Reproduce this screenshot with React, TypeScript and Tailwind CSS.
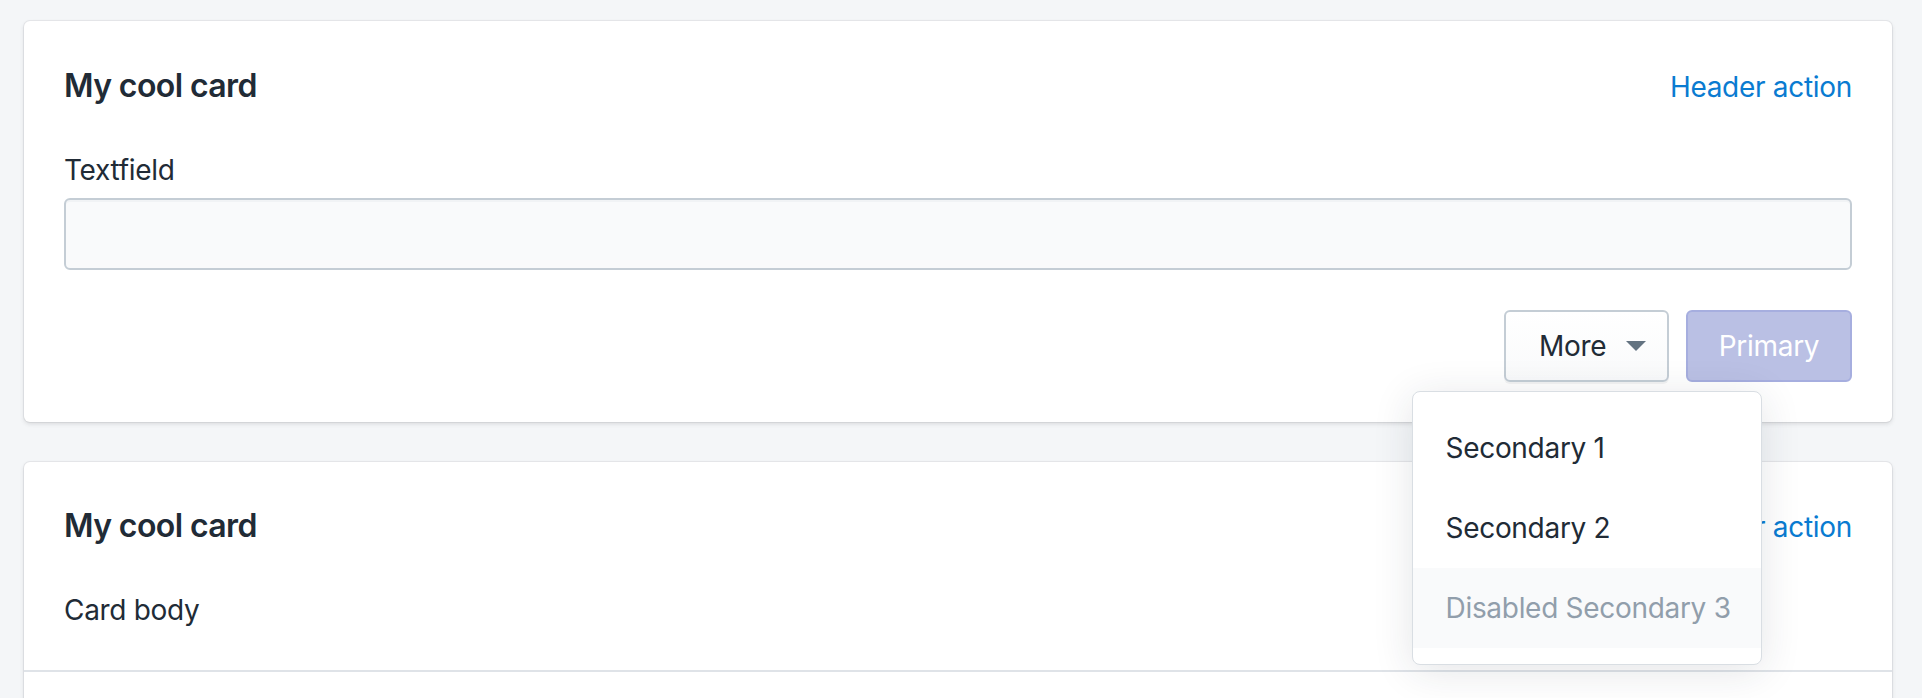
import React from "react";

function Caret() {
  return (
    <svg width="20" height="10" viewBox="0 0 20 10" className="block">
      <path d="M0 0 L20 0 L10 10 Z" fill="#637381" />
    </svg>
  );
}

export default function App() {
  return (
    <div
      className="min-h-screen bg-[#f4f6f8] pt-[21px] pl-[24px] pr-[30px] flex flex-col gap-[40px] text-[#212b36] tracking-[-0.3px]"
      style={{ fontFamily: "Inter, 'Noto Sans', sans-serif" }}
    >
      {/* Card 1 */}
      <div className="relative z-10 bg-white rounded-[6px] shadow-[0_0_0_1px_rgba(63,63,68,0.07),0_2px_4px_0_rgba(63,63,68,0.15)]">
        <div className="flex items-baseline justify-between px-[40px] pt-[41px]">
          <h2 className="text-[32px] leading-[48px] font-semibold tracking-[-0.6px]">My cool card</h2>
          <button className="text-[28px] leading-[40px] text-[#0a7bd1] tracking-[-0.3px]">Header action</button>
        </div>
        <div className="p-[40px]">
          <div className="text-[28px] leading-[40px] mb-[8px]">Textfield</div>
          <div className="h-[72px] rounded-[6px] border-2 border-[#c4cdd5] bg-[#f9fafb] shadow-[inset_0_2px_0_0_rgba(99,115,129,0.05)]" />
        </div>
        <div className="flex justify-end gap-[17px] px-[40px] pb-[40px]">
          <div className="relative">
            <button className="flex items-center h-[72px] w-[165px] pl-[33px] rounded-[6px] border-2 border-[#c4cdd5] bg-gradient-to-b from-white to-[#f9fafb] shadow-[0_2px_0_0_rgba(22,29,37,0.05)] text-[28px] leading-[40px] tracking-[-0.3px]">
              <span>More</span>
              <span className="ml-[20px]">
                <Caret />
              </span>
            </button>
            <div className="absolute left-1/2 -translate-x-1/2 top-[81px] w-[350px] bg-white rounded-[8px] border border-[#d9dee3] shadow-[0_6px_40px_0_rgba(33,43,54,0.12)] py-[16px]">
              <div className="px-[33px] py-[20px] text-[28px] leading-[40px] whitespace-nowrap">Secondary 1</div>
              <div className="px-[33px] py-[20px] text-[28px] leading-[40px] whitespace-nowrap">Secondary 2</div>
              <div className="px-[33px] py-[20px] text-[28px] leading-[40px] whitespace-nowrap bg-[#f9fafb] text-[#919eab]">
                Disabled Secondary 3
              </div>
            </div>
          </div>
          <button className="h-[72px] w-[166px] rounded-[6px] border-2 border-[#a6aedf] bg-[#bac0e4] text-white text-[28px] leading-[40px] tracking-[-0.3px]">
            Primary
          </button>
        </div>
      </div>

      {/* Card 2 */}
      <div className="bg-white rounded-t-[6px] shadow-[0_0_0_1px_rgba(63,63,68,0.07),0_2px_4px_0_rgba(63,63,68,0.15)] flex-1">
        <div className="flex items-baseline justify-between px-[40px] pt-[40px]">
          <h2 className="text-[32px] leading-[48px] font-semibold tracking-[-0.6px]">My cool card</h2>
          <button className="text-[28px] leading-[40px] text-[#0a7bd1] tracking-[-0.3px]">Header action</button>
        </div>
        <div className="p-[40px] text-[28px] leading-[40px]">Card body</div>
        <div className="border-t-2 border-[#dfe3e8] p-[40px] text-[28px] leading-[40px]">&nbsp;</div>
      </div>
    </div>
  );
}
